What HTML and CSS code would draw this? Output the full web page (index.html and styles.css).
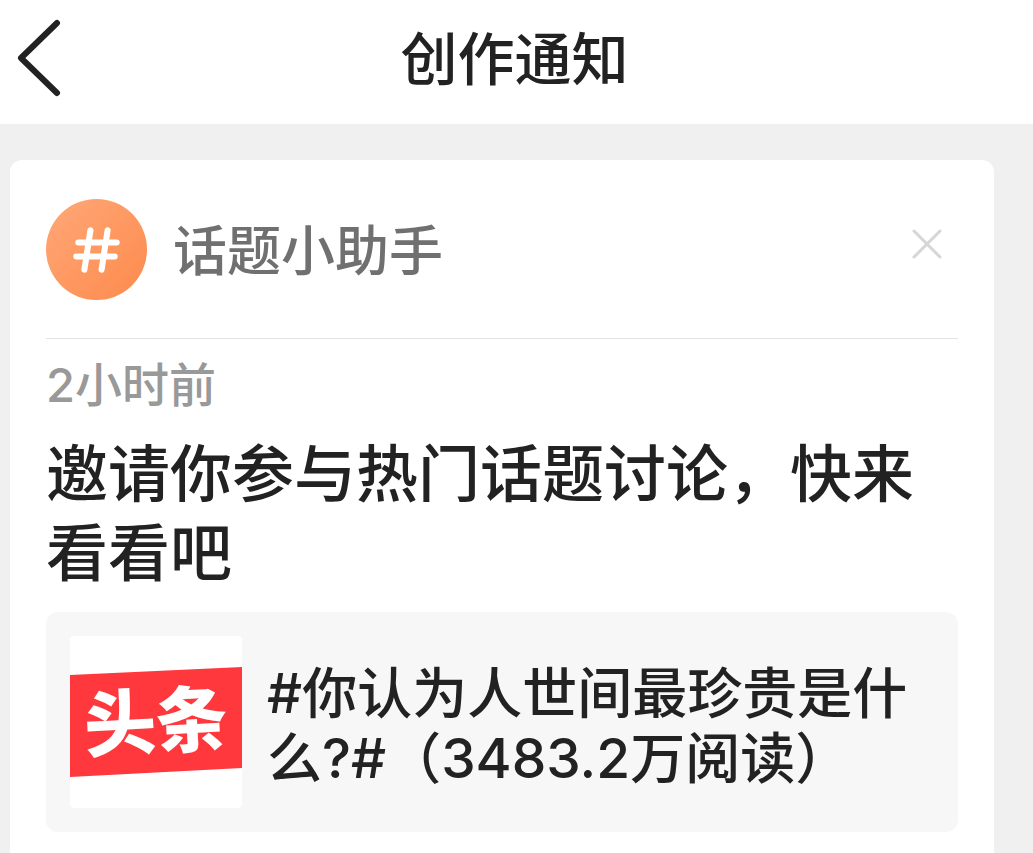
FILE: index.html
```html
<!DOCTYPE html>
<html lang="zh-CN">
<head>
  <meta charset="UTF-8">
  <meta name="viewport" content="width=device-width, initial-scale=1">
  <title>创作通知</title>
  <link rel="stylesheet" href="styles.css">
</head>
<body>
  <!-- Top bar -->
  <header class="topbar">
    <button class="back" type="button" aria-label="返回">
      <svg width="46" height="78" viewBox="0 0 46 78" fill="none" stroke="#222" stroke-width="6" stroke-linecap="round" stroke-linejoin="round">
        <path d="M41 4L5 39L41 74"/>
      </svg>
    </button>
    <h1>创作通知</h1>
  </header>

  <!-- Notice card -->
  <main class="card">
    <div class="card-head">
      <svg class="avatar" viewBox="0 0 100 100" aria-hidden="true">
        <defs>
          <linearGradient id="avatarFill" x1="0" y1="0" x2="1" y2="1">
            <stop offset="0" stop-color="#ffa878"/>
            <stop offset="1" stop-color="#fd8a4c"/>
          </linearGradient>
        </defs>
        <circle cx="50" cy="50" r="50" fill="url(#avatarFill)"/>
        <path d="M44 31L38 70M61 31L55 70M32 43H70M30 57H68" stroke="#fff" stroke-width="6" stroke-linecap="round"/>
      </svg>
      <span class="name">话题小助手</span>
      <button class="close" type="button" aria-label="关闭">
        <svg width="32" height="32" viewBox="0 0 32 32" stroke="#d6d6d6" stroke-width="3" stroke-linecap="round">
          <path d="M3 3L29 29M29 3L3 29"/>
        </svg>
      </button>
    </div>

    <p class="time">2小时前</p>
    <h2>邀请你参与热门话题讨论，快来看看吧</h2>

    <a class="topic" href="#">
      <svg class="thumb" viewBox="0 0 172 172" aria-hidden="true">
        <rect width="172" height="172" rx="4" fill="#fff"/>
        <path d="M0 39L172 31V132L0 141Z" fill="#ff383d"/>
        <text class="logo-text" x="86" y="112" text-anchor="middle" transform="rotate(-3 86 86)">头条</text>
      </svg>
      <span class="topic-title">#你认为人世间最珍贵是什么?#（3483.2万阅读）</span>
    </a>
  </main>
</body>
</html>
```

FILE: styles.css
```css
* {
  box-sizing: border-box;
}
body {
  margin: 0;
  background-color: #f0f0f0;
  color: #222;
  font-family: Inter, "Noto Sans CJK SC", sans-serif;
  font-weight: 500;
}
h1, h2, p {
  margin: 0;
  font-weight: 500;
}
button {
  display: flex;
  padding: 0;
  border: none;
  background: none;
  cursor: pointer;
}
.topbar {
  display: grid;
  grid-template-columns: 64px 1fr 64px;
  align-items: center;
  height: 124px;
  padding: 0 20px 8px 16px;
  background-color: #fff;
}
h1 {
  padding-top: 4px;
  font-size: 57px;
  line-height: 80px;
  text-align: center;
}
.card {
  min-height: calc(100vh - 160px);
  margin: 36px 39px 0 10px;
  padding: 0 36px 21px;
  border-radius: 12px 12px 0 0;
  background-color: #fff;
}
.card-head {
  display: flex;
  align-items: center;
  gap: 26px;
  padding: 39px 15px 38px 0;
  border-bottom: 1px solid #e2e2e2;
}
.avatar {
  width: 101px;
  height: 101px;
}
.name {
  flex: 1;
  padding-top: 4px;
  color: #707070;
  font-size: 54px;
  line-height: 80px;
}
.close {
  margin-bottom: 12px;
}
.time {
  margin-top: 16px;
  color: #999;
  font-size: 47px;
  line-height: 60px;
}
h2 {
  margin-top: 20px;
  font-size: 62px;
  line-height: 79px;
}
.topic {
  display: flex;
  align-items: center;
  gap: 25px;
  margin-top: 19px;
  padding: 24px;
  border-radius: 12px;
  background-color: #f7f7f7;
  color: #222;
  text-decoration: none;
}
.thumb {
  flex: none;
  width: 172px;
  height: 172px;
}
.logo-text {
  fill: #fff;
  font-size: 72px;
  font-weight: 900;
}
.topic-title {
  flex: 1;
  padding-top: 8px;
  font-size: 55px;
  line-height: 65px;
}
```
